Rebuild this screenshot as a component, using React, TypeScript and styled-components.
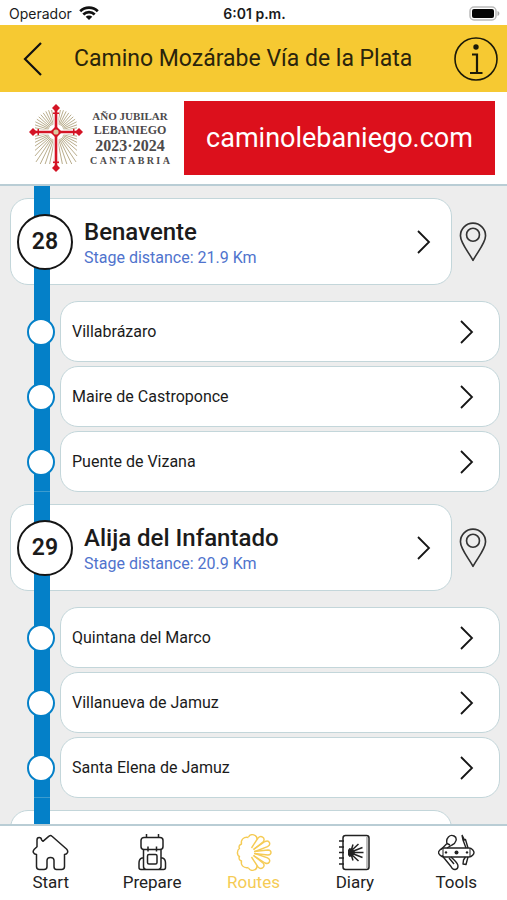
import React from "react";
import styled, { createGlobalStyle } from "styled-components";

const GlobalStyle = createGlobalStyle`
  *, *::before, *::after { box-sizing: border-box; }
  body { margin: 0; background: #fff; font-family: Roboto, sans-serif; color: #1b1b1b; }
  h1, h2, p, ul { margin: 0; padding: 0; }
  ul { list-style: none; }
  button { border: 0; padding: 0; background: none; font: inherit; color: inherit; cursor: pointer; }
  a { color: inherit; text-decoration: none; }
  svg { display: block; }
`;

const Screen = styled.div`
  height: 100vh;
  display: flex;
  flex-direction: column;
`;

const StatusBar = styled.div`
  flex: none;
  height: 25px;
  padding: 2px 7px 0 9px;
  display: grid;
  grid-template-columns: 1fr auto 1fr;
  align-items: center;
  font-family: Inter, sans-serif;
  font-size: 14px;
  line-height: 20px;
`;

const Carrier = styled.div`
  display: flex;
  align-items: center;
  gap: 7px;
`;

const Clock = styled.time`
  font-weight: 600;
`;

const BatterySlot = styled.div`
  justify-self: end;
`;

const Header = styled.header`
  flex: none;
  height: 67px;
  padding: 0 9px 0 12px;
  display: flex;
  align-items: center;
  background: #f6c932;
`;

const BackButton = styled.button`
  width: 62px;
  height: 48px;
  padding-left: 10px;
  display: flex;
  align-items: center;
`;

const Title = styled.h1`
  flex: 1;
  font-size: 23px;
  line-height: 32px;
  font-weight: 400;
  white-space: nowrap;
  color: #2a240c;
`;

const Banner = styled.a`
  flex: none;
  height: 92px;
  padding: 0 12px 0 29px;
  display: flex;
  align-items: center;
  background: #fff;
`;

const BannerWords = styled.div`
  width: 80px;
  margin: 0 14px 0 7px;
  padding-top: 2px;
  font-family: "Liberation Serif", serif;
  font-weight: 700;
  color: #4c4a4b;
  white-space: nowrap;
`;

const BannerLine = styled.div<{ $size: number; $line: number }>`
  display: flex;
  justify-content: center;
  font-size: ${(p) => p.$size}px;
  line-height: ${(p) => p.$line}px;
`;

const Spread = styled.div`
  display: flex;
  justify-content: space-between;
  font-size: 10px;
  line-height: 14px;
`;

const BannerSite = styled.div`
  flex: 1;
  height: 74px;
  display: flex;
  align-items: center;
  justify-content: center;
  background: #dc101c;
  color: #fff;
  font-size: 27px;
  line-height: 36px;
`;

const Stages = styled.main`
  flex: 1;
  min-height: 0;
  overflow-y: auto;
  scrollbar-width: none;
  border-top: 2px solid #b9cdd5;
  background: #ededed;
`;

const Stage = styled.section`
  position: relative;
  padding: 12px 7px 0 10px;

  &::before {
    content: "";
    position: absolute;
    z-index: 1;
    top: 0;
    bottom: 0;
    left: 34px;
    width: 16px;
    background: #0480c8;
    border-bottom: 1px solid #3c9ccf;
  }
`;

const StageRow = styled.div`
  display: flex;
  align-items: center;
  gap: 7px;
`;

const StageCard = styled.button`
  flex: 1;
  height: 87px;
  padding: 0 20px 0 6px;
  display: flex;
  align-items: center;
  text-align: left;
  background: #fff;
  border: 1px solid #c3d6da;
  border-radius: 18px;
`;

const StageNumber = styled.span`
  position: relative;
  z-index: 2;
  flex: none;
  width: 56px;
  height: 56px;
  display: flex;
  align-items: center;
  justify-content: center;
  background: #fff;
  border: 2px solid #151515;
  border-radius: 50%;
  font-size: 23px;
  font-weight: 600;
`;

const StageText = styled.span`
  flex: 1;
  margin-left: 11px;
  padding-top: 4px;
  display: flex;
  flex-direction: column;
`;

const StageName = styled.span`
  font-size: 24px;
  line-height: 27px;
  font-weight: 500;
`;

const StageDistance = styled.span`
  font-size: 16px;
  line-height: 23px;
  color: #4f73cd;
`;

const PinButton = styled.button`
  width: 28px;
  height: 48px;
  margin-right: 13px;
  display: flex;
  align-items: center;
  justify-content: center;
`;

const Towns = styled.ul`
  margin-top: 16px;
  display: flex;
  flex-direction: column;
  gap: 4px;
`;

const Town = styled.li`
  display: flex;
  align-items: center;
  padding-left: 17px;
`;

const Stop = styled.span`
  position: relative;
  z-index: 2;
  flex: none;
  width: 28px;
  height: 28px;
  margin-right: 5px;
  background: #fff;
  border: 2px solid #0480c8;
  border-radius: 50%;
`;

const TownCard = styled.button`
  flex: 1;
  height: 61px;
  padding: 0 25px 0 11px;
  display: flex;
  align-items: center;
  justify-content: space-between;
  text-align: left;
  background: #fff;
  border: 1px solid #c3d6da;
  border-radius: 18px;
  font-size: 16px;
  line-height: 22px;
`;

const TabBar = styled.nav`
  flex: none;
  height: 76px;
  display: flex;
  border-top: 2px solid #b9cdd5;
  background: #fff;
`;

const Tab = styled.a<{ $active?: boolean }>`
  flex: 1;
  padding-top: 8px;
  display: flex;
  flex-direction: column;
  align-items: center;
  font-size: 17px;
  line-height: 22px;
  color: ${(p) => (p.$active ? "#f5cb55" : "#222")};
`;

const Chevron = () => (
  <svg width="14" height="24" viewBox="0 0 14 24" fill="none" stroke="#151515" strokeWidth="1.8">
    <path d="M1 1l11 11L1 23" />
  </svg>
);

const Wifi = () => (
  <svg width="20" height="15" viewBox="0 0 20 15" fill="none" stroke="#111" strokeWidth="2.7">
    <path d="M1.2 5.2a12.5 12.5 0 0 1 17.6 0M4.3 8.5a8.1 8.1 0 0 1 11.4 0" />
    <path d="M10 14L6.7 10.8a4.7 4.7 0 0 1 6.6 0z" fill="#111" stroke="none" />
  </svg>
);

const Battery = () => (
  <svg width="31" height="15" viewBox="0 0 31 15">
    <rect x="1" y="1" width="26" height="13" rx="4" fill="#fff" stroke="#bbb" strokeWidth="1.5" />
    <rect x="3" y="3" width="22" height="9" rx="2" fill="#050505" />
    <path d="M28.5 5c2.5.8 2.5 4.2 0 5z" fill="#aaa" />
  </svg>
);

const Info = () => (
  <svg width="44" height="44" viewBox="0 0 44 44" fill="none" stroke="#1b1908" strokeWidth="1.6">
    <circle cx="22" cy="22" r="21" />
    <circle cx="22" cy="10" r="2.7" fill="#1b1908" stroke="none" />
    <path d="M18 17.5h5V36M16 36h12.5" strokeWidth="2.2" />
  </svg>
);

const Pin = () => (
  <svg width="28" height="40" viewBox="0 0 29 41" fill="none" stroke="#333" strokeWidth="1.7" strokeLinejoin="round">
    <path d="M14.5 39.5C10 31 1.5 21.5 1.5 14a13 13 0 0 1 26 0c0 7.5-8.5 17-13 25.5z" />
    <circle cx="14.5" cy="13" r="6.7" />
  </svg>
);

const rays = Array.from({ length: 48 }, (_, i) => {
  const a = (i * Math.PI) / 24 + Math.PI / 48;
  const dx = Math.cos(a);
  const dy = Math.sin(a);
  const reach = dy > 0 ? 36 : 23;
  const r = Math.min(21 / Math.abs(dx), (dy > 0 ? 32 : 22) / Math.abs(dy), reach);
  return `M${27 + dx * 8} ${28 + dy * 8}L${27 + dx * r} ${28 + dy * r}`;
}).join("");

const Cross = () => (
  <svg width="54" height="68" viewBox="0 0 54 68">
    <path d={rays} stroke="#b9ad8c" strokeWidth="1" />
    <path d="M27 4v60M3 28h48" stroke="#fff" strokeWidth="5" />
    <path d="M27 4v60M3 28h48" stroke="#d41425" strokeWidth="2.6" />
    <g fill="#d41425">
      <path d="M27 0l4 4-4 4-4-4zM27 60l4 4-4 4-4-4zM4 24l4 4-4 4-4-4zM50 24l4 4-4 4-4-4z" />
      <path d="M24 8.5h6V10h-6zM24 57.5h6V59h-6zM8.5 25H10v6H8.5zM44 25h1.5v6H44z" />
      <path d="M27 22l6 6-6 6-6-6z" />
    </g>
    <circle cx="27" cy="28" r="2.6" fill="#d8c9a0" />
  </svg>
);

const HomeIcon = () => (
  <svg width="37" height="37" viewBox="0 0 37 37" fill="none" stroke="currentColor" strokeWidth="1.5" strokeLinejoin="round">
    <path d="M17 2.2a2.2 2.2 0 0 1 3 0L34.5 15c2.3 2.500 1.2 5.2-2 5.6v12q0 3-3 3h-5q-2.5 0-2.5-3v-6q0-3.2-3.5-3.2T15 26.6v6q0 3-3 3H7.5q-3 0-3-3v-12C1.2 20 .2 17.5 2.3 15.2L5 12.7V6q0-2.4 2.2-2.4T9.6 6l1.3 1.3z" />
  </svg>
);

const BackpackIcon = () => (
  <svg width="37" height="37" viewBox="0 0 37 37" fill="none" stroke="currentColor" strokeWidth="1.5">
    <rect x="7" y="3.5" width="22" height="12" rx="3" />
    <path d="M12.5 0v4M24.5 0v4M14 12.5v5M22.5 12.5v5M9.5 15.5v17q0 2.5 2.5 3M27 15.5v17q0 2.5-2.5 3M9.5 24H8q-3 1-3 5v4.5q0 2 2 2h22.5q2 0 2-2V29q0-4-3-5H27" />
    <rect x="13.5" y="20.5" width="9.5" height="9.5" rx="1.5" />
  </svg>
);

const ShellIcon = () => (
  <svg width="37" height="37" viewBox="0 0 37 37" fill="none" stroke="currentColor" strokeWidth="1.4" strokeLinejoin="round">
    <path d="M19 17.5l14-1.5c4 .2 4 5 0 5l-14-1.5" />
    <path d="M18.5 15.5L30 7.5c4.5-1.8 6.5 3 2.5 5.2L20 17.5M18.5 21.5L30 29c4.5 1.8 6.5-3 2.5-5.2L20 19.5" />
    <path d="M16.5 14L23 4c3-3 7.5-.5 5.500 3.500L18.500 15.500M16.500 23L23 33c3 3 7.500.5 5.500-3.500L18.500 21.500" />
    <path d="M22 5.500c.5-5-6.500-6.500-8.500-2.500M22 31.500c.5 5-6.500 6.500-8.500 2.500" />
    <path d="M13.500 3.500C8.500 2.500 5.500 6 6.500 10c-2.500 1-3 3-2 4.500-2.500 1.500-3 6.500 0 8-1 1.500-.5 3.500 2 4.500-1 4 2 7.500 7 6.500" />
  </svg>
);

const DiaryIcon = () => (
  <svg width="37" height="37" viewBox="0 0 37 37" fill="none" stroke="currentColor" strokeWidth="1.5">
    <rect x="7" y="1.5" width="26" height="34" rx="2.5" />
    <path d="M31 3v31" strokeWidth="0.6" />
    <path d="M3 7h5M3 13h5M3 18.5h5M3 24h5M3 30h5" />
    <path d="M12 16l1.5-2 3 1 3 3.5-3 3.5-3 1-1.5-2z" fill="currentColor" stroke="none" />
    <path d="M15 18.5h12.5M15 18l11.5-4.5M15 17l7.5-7M15 17l2-6.500M15 19l11.5 4.5M15 20l7.5 7M15 20l2 6.5" strokeWidth="1.5" />
  </svg>
);

const KnifeIcon = () => (
  <svg width="37" height="37" viewBox="0 0 37 37" fill="none" stroke="currentColor" strokeWidth="1.4" strokeLinejoin="round">
    <path d="M6 14h25c3 0 5 3 5 4.5S34 23 31 23H6c-3 0-5.5-3-5.5-4.5S3 14 6 14z" />
    <path d="M5 14.5v8M32 14.5v8" strokeWidth="1" />
    <path d="M3 15.5l6-6C7.5 4 12 0 16 2c4 2 2 7.5-2 9l-5 3M9 9.5l3 1.5M24 1l2.5 5 1-.5 2.5 8.5M24 1l1 5 3 8M4 21.5l9 11C15 37 20 36 20 32c0-3-4-6-7-9M11 24l5 6M30 23l-2 7.5-3-.5.5-4 2-3" />
    <g fill="currentColor" stroke="none">
      <circle cx="8" cy="18.4" r="1.2" />
      <circle cx="18.5" cy="18.4" r="2" />
      <circle cx="29" cy="18.4" r="1.2" />
    </g>
  </svg>
);

const stages = [
  { number: 28, name: "Benavente", distance: "21.9", towns: ["Villabrázaro", "Maire de Castroponce", "Puente de Vizana"] },
  { number: 29, name: "Alija del Infantado", distance: "20.9", towns: ["Quintana del Marco", "Villanueva de Jamuz", "Santa Elena de Jamuz"] },
  { number: 30, name: "", distance: "", towns: [] },
];

const tabs = [
  { label: "Start", Icon: HomeIcon },
  { label: "Prepare", Icon: BackpackIcon },
  { label: "Routes", Icon: ShellIcon, active: true },
  { label: "Diary", Icon: DiaryIcon },
  { label: "Tools", Icon: KnifeIcon },
];

export default function App() {
  return (
    <Screen>
      <GlobalStyle />
      <StatusBar>
        <Carrier>Operador <Wifi /></Carrier>
        <Clock>6:01 p.m.</Clock>
        <BatterySlot><Battery /></BatterySlot>
      </StatusBar>
      <Header>
        <BackButton aria-label="Back">
          <svg width="20" height="36" viewBox="0 0 20 36" fill="none" stroke="#111" strokeWidth="2.2">
            <path d="M19 2L3 18l16 16" />
          </svg>
        </BackButton>
        <Title>Camino Mozárabe Vía de la Plata</Title>
        <button aria-label="Information"><Info /></button>
      </Header>
      <Banner href="#caminolebaniego">
        <Cross />
        <BannerWords>
          <BannerLine $size={11} $line={13}>AÑO JUBILAR</BannerLine>
          <BannerLine $size={12} $line={14}>LEBANIEGO</BannerLine>
          <BannerLine $size={16} $line={17}>2023·2024</BannerLine>
          <Spread aria-label="Cantabria">
            {"CANTABRIA".split("").map((c, i) => <span key={i}>{c}</span>)}
          </Spread>
        </BannerWords>
        <BannerSite>caminolebaniego.com</BannerSite>
      </Banner>
      <Stages>
        {stages.map((s) => (
          <Stage key={s.number}>
            <StageRow>
              <StageCard aria-label={s.name || undefined}>
                {s.name && (
                  <>
                    <StageNumber>{s.number}</StageNumber>
                    <StageText>
                      <StageName>{s.name}</StageName>
                      <StageDistance>Stage distance: {s.distance} Km</StageDistance>
                    </StageText>
                    <Chevron />
                  </>
                )}
              </StageCard>
              <PinButton aria-label="Show on map"><Pin /></PinButton>
            </StageRow>
            <Towns>
              {s.towns.map((t) => (
                <Town key={t}>
                  <Stop />
                  <TownCard>{t}<Chevron /></TownCard>
                </Town>
              ))}
            </Towns>
          </Stage>
        ))}
      </Stages>
      <TabBar>
        {tabs.map(({ label, Icon, active }) => (
          <Tab key={label} href={`#${label.toLowerCase()}`} $active={active} aria-current={active ? "page" : undefined}>
            <Icon />
            {label}
          </Tab>
        ))}
      </TabBar>
    </Screen>
  );
}
